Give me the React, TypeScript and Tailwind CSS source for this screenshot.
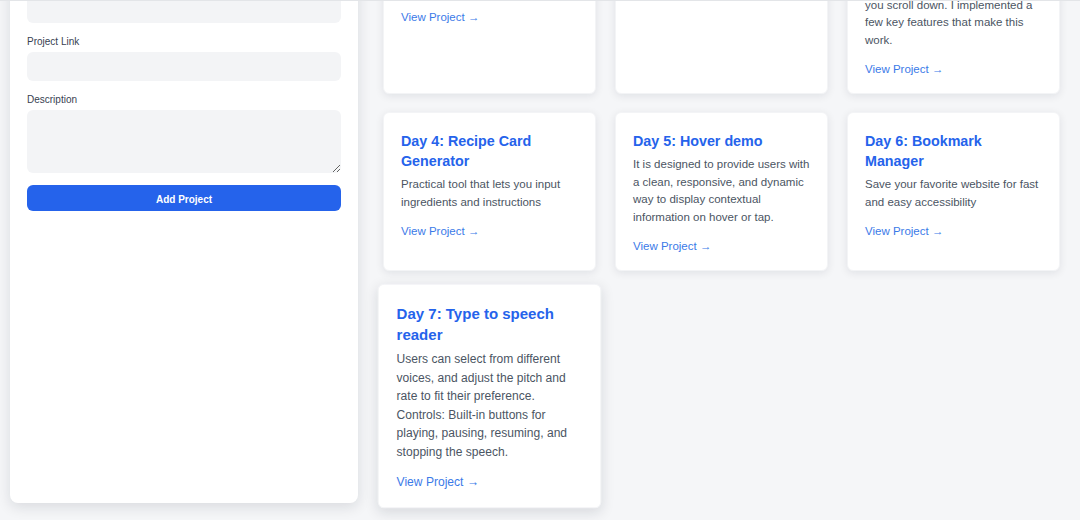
import React from 'react';

type Project = {
  title: string;
  desc?: string;
  link: string;
};

const projects: Project[] = [
  {
    title: 'Day 1: Counter App',
    desc: 'A simple counter with increment, decrement and reset buttons.',
    link: '#',
  },
  {
    title: 'Day 2: Color Picker',
    link: '#',
  },
  {
    title: 'Day 3: Infinite Scroll',
    desc: 'An endless feed that automatically loads new posts and images as you scroll down. I implemented a few key features that make this work.',
    link: '#',
  },
  {
    title: 'Day 4: Recipe Card Generator',
    desc: 'Practical tool that lets you input ingredients and instructions',
    link: '#',
  },
  {
    title: 'Day 5: Hover demo',
    desc: 'It is designed to provide users with a clean, responsive, and dynamic way to display contextual information on hover or tap.',
    link: '#',
  },
  {
    title: 'Day 6: Bookmark Manager',
    desc: 'Save your favorite website for fast and easy accessibility',
    link: '#',
  },
  {
    title: 'Day 7: Type to speech reader',
    desc: 'Users can select from different voices, and adjust the pitch and rate to fit their preference. Controls: Built-in buttons for playing, pausing, resuming, and stopping the speech.',
    link: '#',
  },
];

const ProjectCard = ({ project, active }: { project: Project; active?: boolean }) => (
  <div
    className={`bg-white rounded-md shadow-[0_2px_8px_rgba(15,23,42,0.09)] border border-gray-100 px-[17px] pt-[18px] pb-[15px] transition-transform duration-300 ${
      active ? 'scale-105 shadow-[0_4px_12px_rgba(15,23,42,0.12)]' : ''
    }`}
  >
    <h3 className="text-[14.3px] leading-5 font-bold text-[#2563eb]">{project.title}</h3>
    {project.desc && (
      <p className="mt-[5px] text-[11.5px] leading-[17.5px] text-[#4b5563]">{project.desc}</p>
    )}
    <a href={project.link} className="mt-[11px] block text-[11.5px] leading-[18px] text-[#3b7ae8]">
      View Project →
    </a>
  </div>
);

const Field = ({ label, children }: { label: string; children: React.ReactNode }) => (
  <div className="mb-[11px]">
    <label className="block text-[10px] leading-4 mb-[2px] text-[#374151]">{label}</label>
    {children}
  </div>
);

export default function App() {
  return (
    <div
      className="relative h-[520px] overflow-hidden bg-[#f5f6f8]"
      style={{ fontFamily: '"Liberation Sans", Arial, sans-serif' }}
    >
      {/* header edge */}
      <div className="absolute inset-x-0 top-0 h-px bg-[#e3e5e8] z-10" />

      <div className="flex items-stretch gap-[25px] pl-[10px] pr-[20px] -mt-[82.5px]">
        <aside className="w-[348px] shrink-0 bg-white rounded-lg shadow-[0_4px_14px_rgba(15,23,42,0.12)] px-[17px] pt-4">
          <h2 className="text-lg leading-7 font-bold text-gray-800 mb-[14px]">Add New Project</h2>
          <Field label="Project Title">
            <input className="block w-full h-[29px] rounded-md bg-[#f3f4f6] outline-none px-2 text-xs" />
          </Field>
          <Field label="Project Link">
            <input className="block w-full h-[29px] rounded-md bg-[#f3f4f6] outline-none px-2 text-xs" />
          </Field>
          <div>
            <label className="block text-[10px] leading-4 mb-[2px] text-[#374151]">Description</label>
            <textarea className="block w-full h-[63px] rounded-md bg-[#f3f4f6] outline-none px-2 py-1 text-xs" />
          </div>
          <button className="mt-3 w-full h-[26px] pt-[3px] rounded-md bg-[#2563eb] text-white text-[10px] font-bold">
            Add Project
          </button>
        </aside>

        <main className="flex-1 grid grid-cols-3 gap-x-[19px] gap-y-[18px] content-start">
          {projects.map((p, i) => (
            <ProjectCard key={p.title} project={p} active={i === 6} />
          ))}
        </main>
      </div>
    </div>
  );
}
